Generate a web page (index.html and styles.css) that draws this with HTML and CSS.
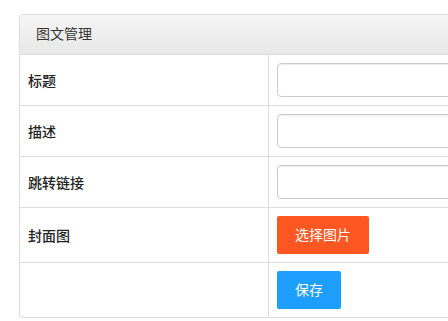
FILE: index.html
```html
<!DOCTYPE html>
<html lang="zh-CN">
<head>
    <meta charset="UTF-8">
    <meta name="viewport" content="width=device-width, initial-scale=1.0">
    <title>图文管理</title>
    <link rel="stylesheet" href="styles.css">
</head>
<body>

<div class="panel">
    <div class="panel-heading">图文管理</div>

    <table class="form-table">
        <tbody>
            <tr>
                <th>标题</th>
                <td><input type="text" class="form-control"></td>
            </tr>
            <tr>
                <th>描述</th>
                <td><input type="text" class="form-control"></td>
            </tr>
            <tr>
                <th>跳转链接</th>
                <td><input type="text" class="form-control"></td>
            </tr>
            <tr>
                <th>封面图</th>
                <td><button class="btn btn-danger">选择图片</button></td>
            </tr>
            <tr>
                <th></th>
                <td><button class="btn btn-normal">保存</button></td>
            </tr>
        </tbody>
    </table>
</div>

</body>
</html>
```

FILE: styles.css
```css
/* General Styles */
html, body {
    overflow: hidden;
}

body {
    margin: 0;
    padding: 14px 0 0 19px;
    font-family: "Liberation Sans", "Noto Sans CJK SC", sans-serif;
    font-size: 14px;
    color: #333;
    background-color: #fff;
}

.panel {
    width: 620px;
    border: 1px solid #ddd;
    border-radius: 4px;
    background-color: #fff;
    box-shadow: 0 1px 1px rgba(0, 0, 0, 0.05);
}

.panel-heading {
    height: 39px;
    line-height: 39px;
    padding: 0 16px;
    border-bottom: 1px solid #ddd;
    border-radius: 3px 3px 0 0;
    background-image: linear-gradient(to bottom, #f5f5f5 0, #e8e8e8 100%);
}

/* Table */
.form-table {
    width: 100%;
    border-collapse: collapse;
}

.form-table th,
.form-table td {
    padding: 8px;
    border-bottom: 1px solid #ddd;
    vertical-align: middle;
    text-align: left;
}

.form-table tr:last-child th,
.form-table tr:last-child td {
    border-bottom: 0;
}

.form-table th {
    width: 232px;
    border-right: 1px solid #ddd;
    font-weight: 500;
    color: #222;
}

.form-control {
    display: block;
    box-sizing: border-box;
    width: 100%;
    height: 34px;
    padding: 6px 12px;
    border: 1px solid #ccc;
    border-radius: 4px;
    box-shadow: inset 0 1px 1px rgba(0, 0, 0, 0.075);
    font-size: 14px;
}

/* Buttons */
.btn {
    display: inline-block;
    height: 38px;
    line-height: 38px;
    padding: 0 18px;
    border: none;
    border-radius: 2px;
    color: #fff;
    font-family: inherit;
    font-size: 14px;
    cursor: pointer;
    vertical-align: middle;
}

.btn-danger {
    background-color: #ff5722;
}

.btn-normal {
    background-color: #1e9fff;
}
```
